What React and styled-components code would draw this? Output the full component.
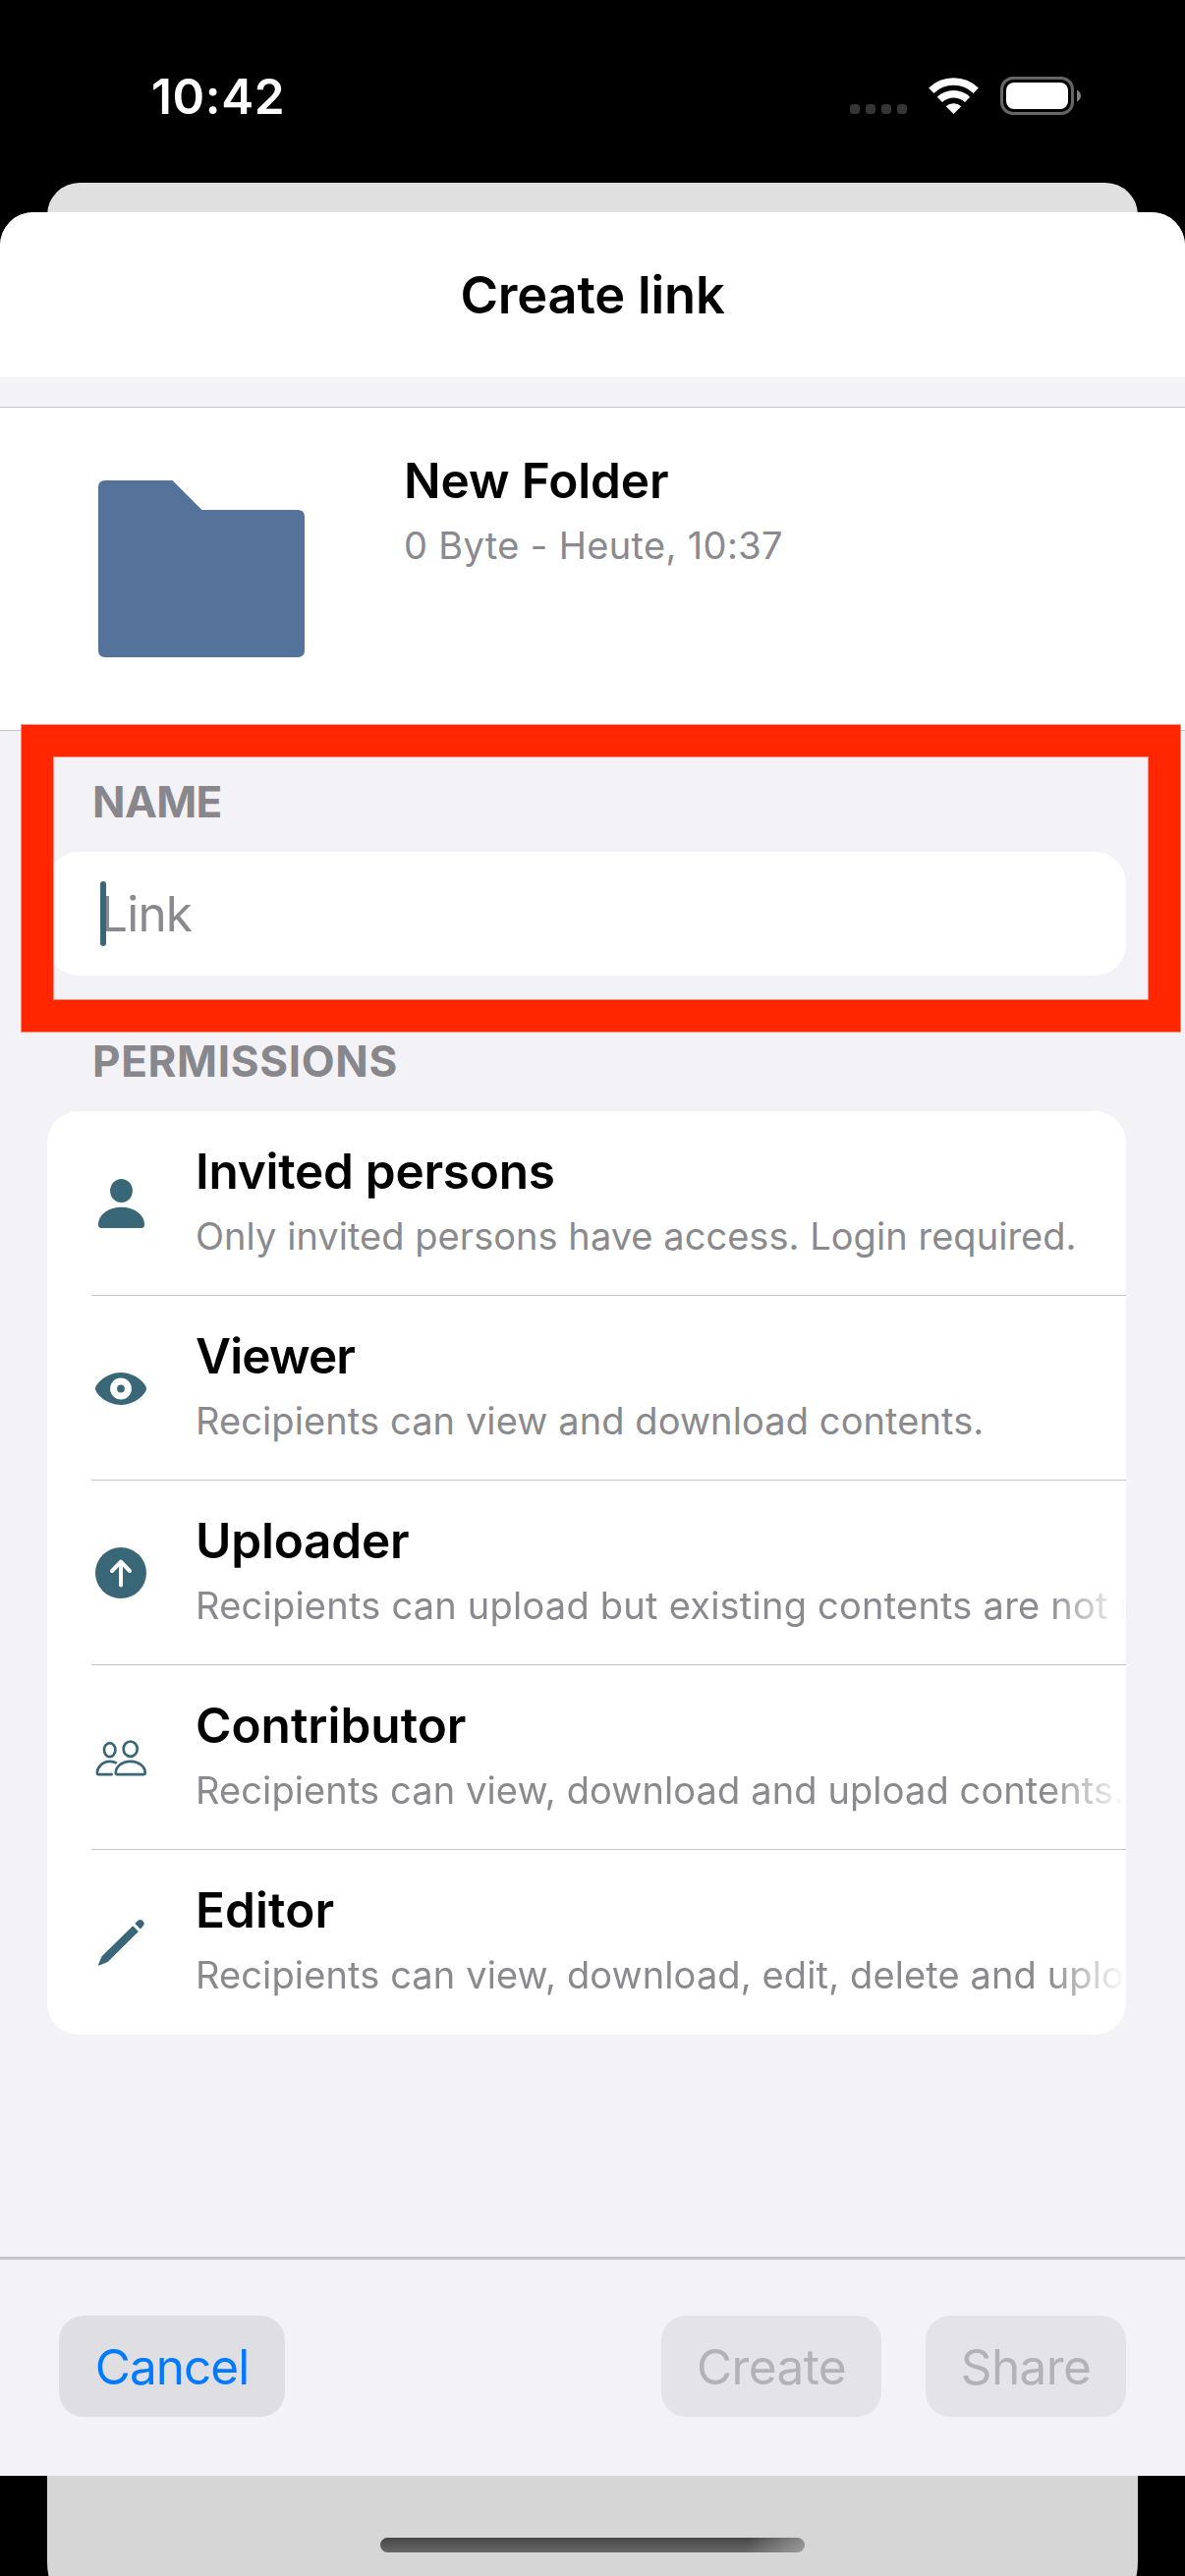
import React from "react";
import styled, { createGlobalStyle } from "styled-components";

const TEAL = "#3a6778";

const GlobalStyle = createGlobalStyle`
  * { box-sizing: border-box; }
  body { margin: 0; background: #000; }
`;

const Screen = styled.div`
  position: relative;
  width: 1206px;
  height: 2622px;
  overflow: hidden;
  background: #000;
  font-family: Inter, "Liberation Sans", sans-serif;
  font-size: 49.5px;
  color: #000;
`;

const StatusBar = styled.header`
  display: flex;
  align-items: flex-start;
  justify-content: space-between;
  height: 186px;
  padding: 68px 106px 0 154px;
`;

const Clock = styled.time`
  color: #fff;
  font-weight: 600;
  line-height: 60px;
  letter-spacing: 0.6px;
`;

const StatusIcons = styled.svg`
  display: block;
  margin-top: 10px;
`;

const PreviousCard = styled.div`
  height: 2490px;
  margin: 0 48px;
  border-radius: 33px 33px 68px 68px;
  background: linear-gradient(#e0e0e0 0 200px, #d6d6d6 200px);
`;

const Sheet = styled.main`
  position: absolute;
  top: 216px;
  left: 0;
  display: flex;
  flex-direction: column;
  width: 1206px;
  height: 2304px;
  border-radius: 34px 34px 0 0;
  overflow: hidden;
  background: #f2f2f7;
`;

const TitleBar = styled.div`
  display: flex;
  flex: none;
  justify-content: center;
  height: 168px;
  padding-top: 54px;
  background: #fff;
`;

const Title = styled.h1`
  margin: 0;
  font-size: 52.4px;
  font-weight: 600;
  line-height: 60px;
  letter-spacing: -0.2px;
`;

const ItemHeader = styled.section`
  display: flex;
  flex: none;
  gap: 101px;
  height: 330px;
  margin-top: 30px;
  padding: 44px 0 0 100px;
  border: solid #c5c5c8;
  border-width: 1px 0;
  background: #fff;
`;

const FolderIcon = styled.svg`
  flex: none;
  margin-top: 30px;
`;

const Label = styled.div`
  display: flex;
  flex-direction: column;
  gap: 12px;
  min-width: 0;
`;

const Name = styled.div`
  font-weight: 600;
  line-height: 60px;
  letter-spacing: ${(p) => p.$track}px;
  white-space: nowrap;
`;

const Detail = styled.div`
  overflow: hidden;
  color: #8a8a8e;
  font-size: 38px;
  line-height: 48px;
  letter-spacing: ${(p) => p.$track}px;
  white-space: nowrap;
  ${(p) => p.$fade && "mask-image: linear-gradient(to left, transparent 0, #000 80px);"}
`;

const SectionTitle = styled.h2`
  flex: none;
  margin: ${(p) => p.$top}px 0 27px 94px;
  color: #87878c;
  font-size: 44px;
  font-weight: 700;
  line-height: 48px;
  letter-spacing: ${(p) => p.$track}px;
`;

const Field = styled.div`
  display: flex;
  flex: none;
  align-items: center;
  height: 126px;
  margin: 0 60px 0 48px;
  padding-left: 54px;
  border-radius: 32px;
  background: #fff;
`;

const Caret = styled.span`
  z-index: 1;
  width: 6px;
  height: 66px;
  margin-right: -6px;
  border-radius: 3px;
  background: ${TEAL};
`;

const Placeholder = styled.span`
  color: #8a8a8e;
  line-height: 60px;
  letter-spacing: -0.8px;
`;

const Permissions = styled.ul`
  flex: none;
  height: 940px;
  margin: 0 60px 0 48px;
  padding: 0;
  border-radius: 32px;
  overflow: hidden;
  background: #fff;
  list-style: none;
`;

const Row = styled.li`
  display: grid;
  grid-template-columns: 60px 1fr;
  column-gap: 46px;
  height: 188px;
  margin-left: 45px;
  padding-top: 31px;
  border-bottom: ${(p) => (p.$last ? 0 : 1)}px solid #c5c5c8;
`;

const RowIcon = styled.svg`
  display: block;
  margin-top: 32px;
  color: ${TEAL};
`;

const Footer = styled.footer`
  display: flex;
  flex: none;
  align-items: flex-start;
  height: 223px;
  margin-top: auto;
  padding: 57px 60px 0;
  border-top: 3px solid #c5c5c8;
`;

const Button = styled.button`
  width: ${(p) => p.$width}px;
  height: 103px;
  margin-left: ${(p) => p.$left ?? 0};
  padding: 0;
  border: 0;
  border-radius: 25px;
  background: ${(p) => (p.disabled ? "#e3e3e8" : "#dedee3")};
  color: ${(p) => (p.disabled ? "#b2b2b7" : "#007aff")};
  font: inherit;
  letter-spacing: ${(p) => p.$track ?? -0.6}px;
`;

const HomeIndicator = styled.div`
  position: absolute;
  left: 387px;
  top: 2583px;
  width: 432px;
  height: 15px;
  border-radius: 8px;
  background: linear-gradient(100deg, transparent 86%, rgba(190, 190, 190, 0.6)),
    linear-gradient(#454545, #686868);
`;

const Highlight = styled.div`
  position: absolute;
  left: 22px;
  top: 738px;
  width: 1179px;
  height: 312px;
  border: 32px solid #ff2600;
  box-shadow: 0 0 0 1px rgba(255, 38, 0, 0.5), inset 0 0 0 1px rgba(255, 38, 0, 0.5);
`;

const icons = {
  person: (
    <g fill="currentColor">
      <ellipse cx="30.5" cy="18" rx="11.4" ry="12.1" />
      <path d="M10.5 56a3.5 3.5 0 0 1-3.5-3.5C7 42 18 34.700 30.500 34.700S54 42 54 52.500A3.500 3.500 0 0 1 50.500 56Z" />
    </g>
  ),
  eye: (
    <g>
      <path fill="currentColor" d="M4 31.500C4 27 15 15 30 15s26 12 26 16.500S45 48 30 48 4 36 4 31.500Z" />
      <circle cx="30" cy="31.500" r="7.400" fill="currentColor" stroke="#fff" strokeWidth="7" />
    </g>
  ),
  upload: (
    <g>
      <circle cx="30" cy="31" r="26" fill="currentColor" />
      <path d="M30 43.500V20M21 29l9-9.300 9 9.300" fill="none" stroke="#fff" strokeWidth="4" strokeLinecap="round" strokeLinejoin="round" />
    </g>
  ),
  people: (
    <g fill="none" stroke="currentColor" strokeWidth="2.700" strokeLinecap="butt" strokeLinejoin="round">
      <ellipse cx="18.700" cy="23.200" rx="5.700" ry="7" />
      <ellipse cx="39.700" cy="22.200" rx="7" ry="7.700" />
      <path d="M21.700 48.100H7.400C6.400 48.100 5.900 47.400 5.900 46.400C6 40.500 11.500 34.900 18.700 34.900c2.600 0 5 .6 7 1.800" />
      <path d="M26.600 48.100c-1.200 0-1.800-.6-1.800-1.700 0-5.500 5.600-11.500 14.900-11.500s15 6 15 11.500c0 1.100-.7 1.700-1.900 1.700Z" />
    </g>
  ),
  pencil: (
    <path
      fill="currentColor"
      d="M8.100 54.600c-.8.300-1.300-.2-1-1l3.500-8.400L42.200 14.200l5.700 5.900L16.600 51.100ZM44.300 12l2.900-2.900c1.600-1.500 3.300-1.600 4.600-.3l1 1c1.300 1.300 1.200 3.200-.3 4.700l-2.500 3.100Z"
    />
  ),
};

const rows = [
  {
    icon: "person",
    name: "Invited persons",
    track: -0.25,
    detail: "Only invited persons have access. Login required.",
    detailTrack: 0.04,
  },
  {
    icon: "eye",
    name: "Viewer",
    track: -0.85,
    detail: "Recipients can view and download contents.",
    detailTrack: 0.1,
  },
  {
    icon: "upload",
    name: "Uploader",
    track: -0.2,
    detail: "Recipients can upload but existing contents are not revealed.",
    detailTrack: 0.23,
    fade: true,
  },
  {
    icon: "people",
    name: "Contributor",
    track: 0,
    detail: "Recipients can view, download and upload contents.",
    detailTrack: 0.11,
    fade: true,
  },
  {
    icon: "pencil",
    name: "Editor",
    track: 0.1,
    detail: "Recipients can view, download, edit, delete and upload contents.",
    detailTrack: 0.12,
    fade: true,
  },
];

export default function App() {
  return (
    <Screen>
      <GlobalStyle />
      <StatusBar>
        <Clock>10:42</Clock>
        <StatusIcons width="235" height="39" viewBox="865 78 235 39">
          <g fill="#353535">
            {[865, 881, 897, 913].map((x) => (
              <rect key={x} x={x} y="106" width="10" height="10" rx="3.500" />
            ))}
          </g>
          <g fill="none" stroke="#fff">
            <path d="M947.800 92.200A32.500 32.500 0 0 1 993.200 92.200" strokeWidth="7.500" />
            <path d="M956.400 101.400A20.500 20.500 0 0 1 984.600 101.400" strokeWidth="7.500" />
          </g>
          <path d="M962.700 108.200a11.500 11.500 0 0 1 15.600 0l-7.800 7.800Z" fill="#fff" />
          <rect x="1019.500" y="79.500" width="72" height="36" rx="11.500" fill="none" stroke="#666" strokeWidth="3" />
          <rect x="1024" y="84" width="63" height="27" rx="8" fill="#fff" />
          <path d="M1096 91.500c5.300 2.500 5.300 9.500 0 12Z" fill="#808080" />
        </StatusIcons>
      </StatusBar>
      <PreviousCard />
      <Sheet>
        <TitleBar>
          <Title>Create link</Title>
        </TitleBar>
        <ItemHeader>
          <FolderIcon width="210" height="180" viewBox="0 0 210 180">
            <path
              fill="#55729a"
              d="M7 0h68.500L105.500 30H203q7 0 7 7v136q0 7-7 7H7q-7 0-7-7V7q0-7 7-7Z"
            />
          </FolderIcon>
          <Label>
            <Name $track={-0.1}>New Folder</Name>
            <Detail $track={0.35}>0 Byte - Heute, 10:37</Detail>
          </Label>
        </ItemHeader>
        <SectionTitle $top={48} $track={-0.6}>NAME</SectionTitle>
        <Field>
          <Caret />
          <Placeholder>Link</Placeholder>
        </Field>
        <SectionTitle $top={63} $track={0.65}>PERMISSIONS</SectionTitle>
        <Permissions>
          {rows.map((r, i) => (
            <Row key={r.name} $last={i === rows.length - 1}>
              <RowIcon width="60" height="62" viewBox="0 0 60 62">{icons[r.icon]}</RowIcon>
              <Label>
                <Name $track={r.track}>{r.name}</Name>
                <Detail $track={r.detailTrack} $fade={r.fade}>{r.detail}</Detail>
              </Label>
            </Row>
          ))}
        </Permissions>
        <Footer>
          <Button $width={230} $track={-1}>Cancel</Button>
          <Button $width={224} $left="auto" disabled>Create</Button>
          <Button $width={204} $left="45px" disabled>Share</Button>
        </Footer>
      </Sheet>
      <HomeIndicator />
      <Highlight />
    </Screen>
  );
}
